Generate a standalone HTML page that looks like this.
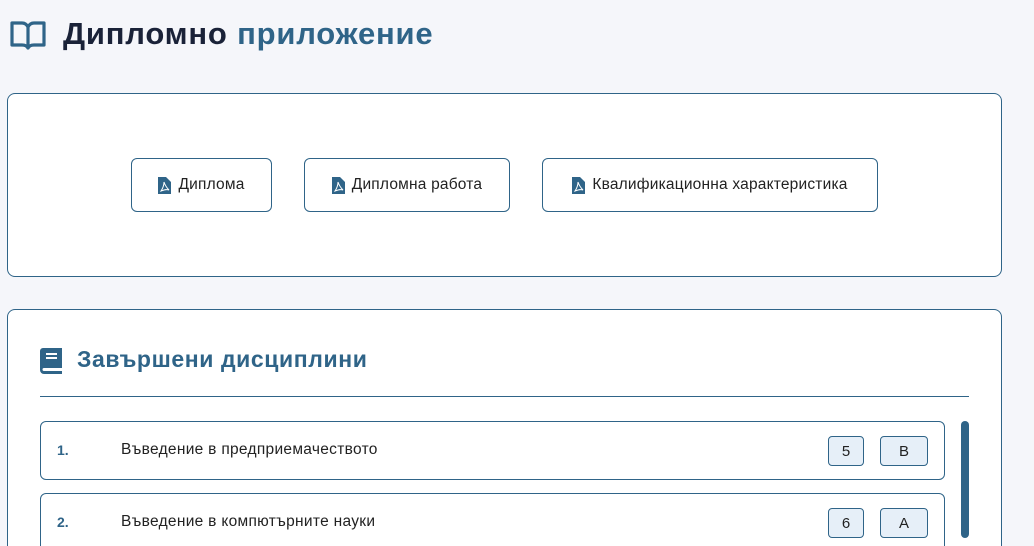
<!DOCTYPE html>
<html style="overflow:hidden;height:546px"><head><meta charset="utf-8"><style>
html,body{overflow:hidden}
body{margin:0;width:1034px;height:546px;background:#f5f6fa;font-family:"Liberation Sans",sans-serif;position:relative;color:#1f2937}
.a{position:absolute}
.card{position:absolute;left:7px;width:995px;background:#fff;border:1px solid #2f6488;border-radius:8px;box-sizing:border-box}
.btn{position:absolute;top:158px;height:54px;border:1px solid #2f6488;border-radius:6px;background:#fff;box-sizing:border-box;font-size:15.5px;display:flex;align-items:center;justify-content:center;gap:7px;color:#222;letter-spacing:0.2px}
.row{position:absolute;left:40px;width:905px;height:59px;border:1px solid #2f6488;border-radius:6px;box-sizing:border-box;background:#fff}
.num{position:absolute;left:16px;top:20px;font-weight:bold;font-size:14px;color:#2f6488}
.txt{position:absolute;left:80px;top:19px;font-size:15.5px;color:#222;letter-spacing:0.3px}
.bd{position:absolute;top:14px;height:30px;border:1px solid #2f6488;border-radius:4px;background:#e6eff8;box-sizing:border-box;font-size:15px;display:flex;align-items:center;justify-content:center;color:#222}
</style></head><body>
<svg class="a" style="left:10px;top:20px" width="36" height="30" viewBox="0 0 36 30"><path d="M2 3h10c3 0 5 2 6 4v21c-1-2-3-3-6-3H2z M34 3H24c-3 0-5 2-6 4v21c1-2 3-3 6-3h10z" fill="none" stroke="#2f6488" stroke-width="3.2" stroke-linejoin="round"/></svg>
<div class="a" style="left:63px;top:16px;font-size:31px;font-weight:bold;color:#1a2238;letter-spacing:0.8px">Дипломно <span style="color:#2f6488">приложение</span></div>
<div class="card" style="top:93px;height:184px"></div>
<div class="btn" style="left:131px;width:141px"><svg width="13" height="17" viewBox="0 0 13 17"><path d="M0 0h8l5 5v12H0z" fill="#2f6488"/><path d="M3 14c2-3 3-6 3-9 1 3 2 5 5 8-3-1-5 0-8 1z" fill="none" stroke="#fff" stroke-width="1"/></svg>Диплома</div>
<div class="btn" style="left:304px;width:206px"><svg width="13" height="17" viewBox="0 0 13 17"><path d="M0 0h8l5 5v12H0z" fill="#2f6488"/><path d="M3 14c2-3 3-6 3-9 1 3 2 5 5 8-3-1-5 0-8 1z" fill="none" stroke="#fff" stroke-width="1"/></svg>Дипломна работа</div>
<div class="btn" style="left:542px;width:336px"><svg width="13" height="17" viewBox="0 0 13 17"><path d="M0 0h8l5 5v12H0z" fill="#2f6488"/><path d="M3 14c2-3 3-6 3-9 1 3 2 5 5 8-3-1-5 0-8 1z" fill="none" stroke="#fff" stroke-width="1"/></svg>Квалификационна характеристика</div>
<div class="card" style="top:309px;height:260px"></div>
<svg class="a" style="left:40px;top:348px" width="22" height="26" viewBox="0 0 22 26"><path d="M3 0h19v20H4a1.5 1.5 0 0 0 0 3h18v3H4a4 4 0 0 1-4-4V3a3 3 0 0 1 3-3z" fill="#2f6488"/><path d="M6 6h11M6 10h11" stroke="#fff" stroke-width="2"/></svg>
<div class="a" style="left:77px;top:346px;font-size:23px;font-weight:bold;color:#2f6488;letter-spacing:0.6px">Завършени дисциплини</div>
<div class="a" style="left:40px;top:396px;width:929px;height:1px;background:#2f6488"></div>
<div class="row" style="top:421px"><div class="num">1.</div><div class="txt">Въведение в предприемачеството</div><div class="bd" style="left:787px;width:36px">5</div><div class="bd" style="left:839px;width:48px">B</div></div>
<div class="row" style="top:493px;height:80px"><div class="num">2.</div><div class="txt">Въведение в компютърните науки</div><div class="bd" style="left:787px;width:36px">6</div><div class="bd" style="left:839px;width:48px">A</div></div>
<div class="a" style="left:961px;top:421px;width:8px;height:117px;background:#2f6488;border-radius:4px"></div>
</body></html>
